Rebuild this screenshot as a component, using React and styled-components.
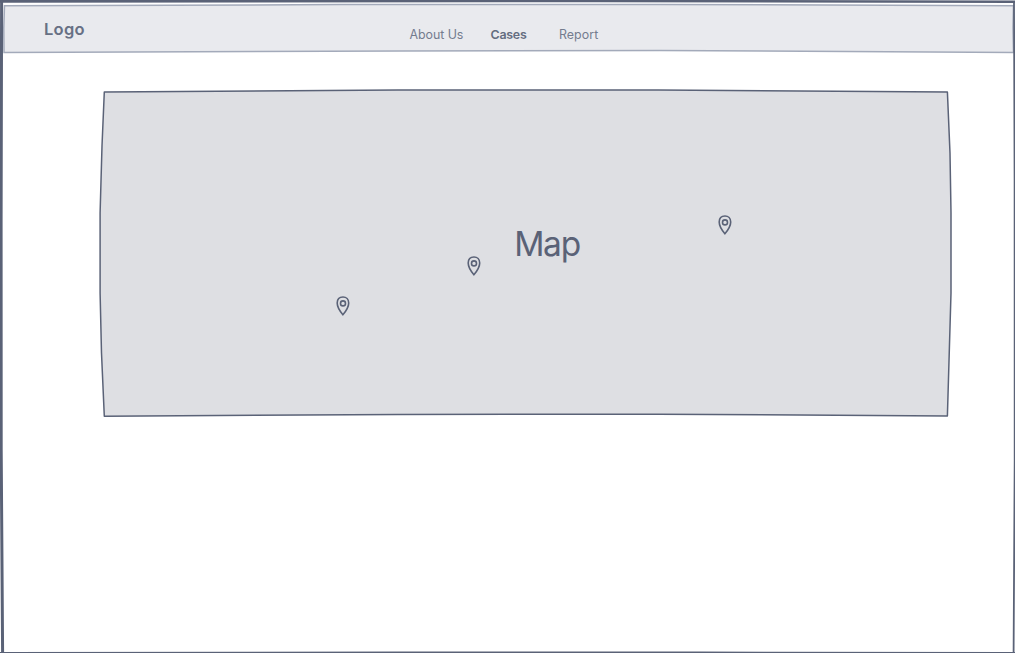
import React from "react";
import styled, { createGlobalStyle } from "styled-components";

const ink = "#5a6277";

const GlobalStyle = createGlobalStyle`
  *, *::before, *::after { box-sizing: border-box; }
  body { margin: 0; background: #fff; }
`;

const Page = styled.div`
  position: relative;
  display: flex;
  flex-direction: column;
  width: 1015px;
  height: 653px;
  overflow: hidden;
  background: #fff;
  color: ${ink};
  font-family: Inter, "Liberation Sans", sans-serif;
`;

const Outline = styled.svg`
  position: absolute;
  inset: 0;
  width: 100%;
  height: 100%;
  fill: none;
  pointer-events: none;
`;

const Header = styled.header`
  position: relative;
  display: flex;
  height: 54px;
  padding-left: 44px;
`;

const Logo = styled.div`
  position: relative;
  width: 365.5px;
  padding-top: 18px;
  font-size: 16.5px;
  line-height: 22px;
  font-weight: 600;
  color: #677084;
  letter-spacing: 0.25px;
`;

const Nav = styled.nav`
  position: relative;
  display: flex;
  padding-top: 27px;
`;

const NavItem = styled.a`
  width: ${(p) => p.$width}px;
  font-size: 12.4px;
  line-height: 16px;
  font-weight: ${(p) => (p.$active ? 600 : 400)};
  letter-spacing: ${(p) => p.$spacing || 0}px;
  color: ${(p) => (p.$active ? "#646d80" : "#747c8e")};
  white-space: nowrap;
`;

const MapPanel = styled.main`
  position: relative;
  width: 855px;
  height: 330px;
  margin: 34px 0 0 98px;
  display: flex;
  justify-content: center;
  padding: 134px 0 0 43px;
`;

const MapTitle = styled.h1`
  position: relative;
  margin: 0;
  font-size: 33.5px;
  line-height: 44px;
  font-weight: 400;
  letter-spacing: -1.3px;
`;

const Pin = styled.svg`
  position: absolute;
  left: ${(p) => p.$x}px;
  top: ${(p) => p.$y}px;
  width: 16px;
  height: 22px;
  fill: none;
  stroke: ${ink};
  stroke-width: 1.6;
  stroke-linejoin: round;
`;

const pins = [
  { x: 236.7, y: 206.5 },
  { x: 367.7, y: 167 },
  { x: 619, y: 126 },
];

export default function App() {
  return (
    <>
      <GlobalStyle />
      <Page>
        <Header>
          <Outline viewBox="0 0 1015 54">
            <path
              d="M4.5 5.8 L340 4.6 L660 4.4 L1013.5 5.8 L1013 28 L1013.5 52.6 L660 50.5 L400 50.9 L4 52.5 L3.8 28Z"
              fill="#e9eaee"
              stroke="#a3aaba"
              strokeWidth="1.5"
            />
          </Outline>
          <Logo>Logo</Logo>
          <Nav>
            <NavItem $width={81} $spacing={-0.05}>About Us</NavItem>
            <NavItem $width={68.5} $active $spacing={-0.25}>Cases</NavItem>
            <NavItem $width={60} $spacing={0.05}>Report</NavItem>
          </Nav>
        </Header>
        <MapPanel>
          <Outline viewBox="0 0 855 330">
            <path
              d="M6.3 4 L300 2.1 L560 2.1 L849.4 4 L852 65 L853 125 L853 205 L849.4 328 L560 326.2 L300 326.5 L6.3 328.2 L3.5 265 L2.1 205 L2.1 125 L4 58Z"
              fill="#dedfe3"
              stroke={ink}
              strokeWidth="1.5"
              strokeLinejoin="round"
            />
          </Outline>
          <MapTitle>Map</MapTitle>
          {pins.map((pin) => (
            <Pin key={pin.x} $x={pin.x} $y={pin.y} viewBox="0 0 16 22">
              <path d="M7.9 19.8 C5.5 17 2.2 12.5 2.2 8.1 C2.2 4.1 4.7 2 8 2 C11.2 2 13.7 4.2 13.7 8 C13.7 12.5 10.1 17.2 7.9 19.8Z" />
              <circle cx="8" cy="8.4" r="2.5" />
            </Pin>
          ))}
        </MapPanel>
        <Outline viewBox="0 0 1015 653">
          <path d="M0 1.4 L600 1 L1015 1.8" stroke={ink} strokeWidth="2.6" />
          <path d="M1.6 0 L1.1 220 L1.2 450 L2.6 653" stroke={ink} strokeWidth="3" />
          <path d="M1014 2 L1014.6 180 L1014.7 460 L1013.6 653" stroke={ink} strokeWidth="1.8" />
          <path d="M0 652.8 L400 652.3 L700 652.3 L1015 652.8" stroke={ink} strokeWidth="1.5" />
        </Outline>
      </Page>
    </>
  );
}
